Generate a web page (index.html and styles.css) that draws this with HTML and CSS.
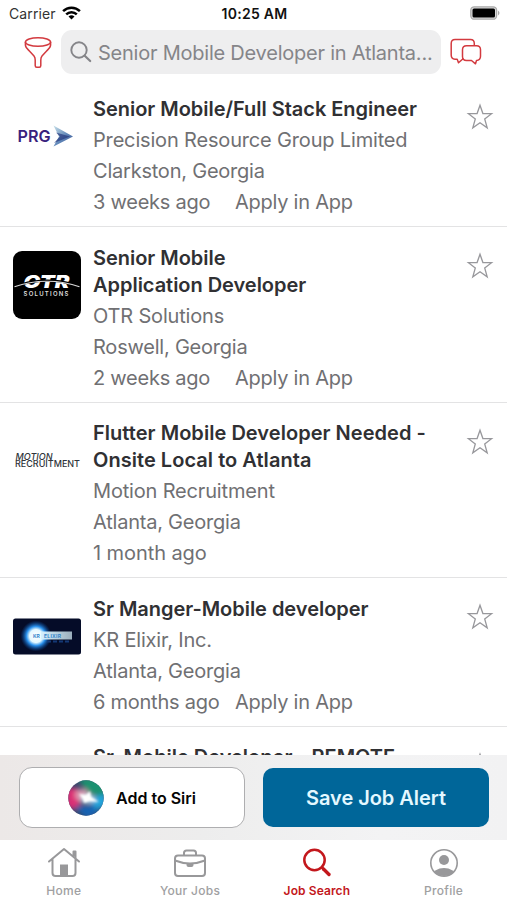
FILE: index.html
```
<!DOCTYPE html>
<html lang="en">
<head>
<meta charset="utf-8">
<title>Job Search</title>
<link rel="stylesheet" href="styles.css">
</head>
<body>
<div class="app">
  <header class="status">
    <div class="carrier"><span>Carrier</span>
      <svg width="19" height="14" viewBox="0 0 19 14"><g fill="none" stroke="#000" stroke-width="2.5"><path d="M1.1 5.2a12 12 0 0 1 16.8 0"/><path d="M4.2 8.4a7.6 7.6 0 0 1 10.6 0"/></g><path d="M9.5 13.6 6.5 10.600a4.300 4.300 0 0 1 6 0z"/></svg>
    </div>
    <time class="clock">10:25 AM</time>
    <svg class="battery" width="30" height="14" viewBox="0 0 30 14"><rect x=".8" y=".8" width="25.800" height="12.400" rx="3.500" fill="#ddd" stroke="#aaa" stroke-width="1.300"/><rect x="2.500" y="2.500" width="22.500" height="9" rx="1.500"/><path d="M28 4.500q3 2.500 0 5z" fill="#aaa"/></svg>
  </header>
  <div class="topbar">
    <svg class="funnel" width="28" height="33" viewBox="0 0 28 33" fill="none" stroke="#d33a3f" stroke-width="1.500"><ellipse cx="14" cy="6" rx="12.600" ry="4.300"/><path d="M1.400 6v3c0 2.500 2 4 4 6l4.600 5c1 1.200 1.200 2 1.200 4v5.500q0 1.800 1.500 1.800h2.600q1.500 0 1.500-1.800V24c0-2 .2-2.800 1.200-4l4.600-5c2-2 4-3.500 4-6V6"/></svg>
    <div class="search">
      <svg width="22" height="22" viewBox="0 0 22 22" fill="none" stroke="#858589" stroke-width="1.900" stroke-linecap="round"><circle cx="9" cy="9" r="7.700"/><path d="m14.700 14.700 5.500 5.300" stroke-width="2.200"/></svg>
      <span class="query">Senior Mobile Developer in Atlanta...</span>
    </div>
    <svg class="chat" width="32" height="28" viewBox="0 0 32 28" fill="none" stroke="#d33a3f" stroke-width="1.500" stroke-linejoin="round"><path d="M24.300 7V5.500Q24.300 1.500 20.500 1.500H5Q1.200 1.500 1.200 5.500V17Q1.200 21 5 21.200H7.200L8.500 24.800 12.500 21.200H14"/><path d="M16.500 7.800H26.500Q30.500 7.800 30.500 11.800V18.300Q30.500 22.300 26.500 22.500L25.500 25.800 21.500 22.500H16.500Q12.500 22.500 12.500 18.500V11.800Q12.500 7.800 16.500 7.800Z"/></svg>
  </div>
  <main class="jobs">
    <article class="job">
      <div class="logo">
        <svg width="68" height="68" viewBox="0 0 68 68"><defs><linearGradient id="arrow" x1="0" y1="0" x2="1" y2="1"><stop offset="0" stop-color="#c9e2ea"/><stop offset=".55" stop-color="#5f86b8"/><stop offset="1" stop-color="#39508f"/></linearGradient></defs><text class="prg" x="4.500" y="40" textLength="33" lengthAdjust="spacingAndGlyphs">PRG</text><path d="M40.500 23.500 60 34.500 40.500 44.500 46 34.500z" fill="url(#arrow)"/><path d="M41 41 47 34.500 43 30.500 57 34.500z" fill="#1f2f78" opacity=".65"/></svg>
      </div>
      <div class="info">
        <h2>Senior Mobile/Full Stack Engineer</h2>
        <p>Precision Resource Group Limited</p>
        <p class="place">Clarkston, Georgia</p>
        <p class="meta"><span>3 weeks ago</span><span>Apply in App</span></p>
      </div>
      <svg class="star" width="28" height="28" viewBox="0 0 28 28"><path d="M14 2.200 16.900 10.500 25.600 10.700 18.700 16 21.200 24.800 14 19.700 6.800 24.800 9.300 16 2.400 10.700 11.100 10.500Z"/></svg>
    </article>
    <article class="job">
      <div class="logo">
        <svg width="68" height="68" viewBox="0 0 68 68"><rect width="68" height="68" rx="9"/><text class="otr" x="10.500" y="37" textLength="46" lengthAdjust="spacingAndGlyphs">OTR</text><path d="M9 33.200Q20 29.600 34 29.600T59 33" stroke="#000" stroke-width="2.200" fill="none"/><path d="M1.500 35.800Q16 30.200 34 30.200T66.500 35.800" stroke="#d8d8d8" stroke-width="1.100" fill="none"/><text class="otr-sub" x="10.500" y="45" textLength="45" lengthAdjust="spacing">SOLUTIONS</text></svg>
      </div>
      <div class="info">
        <h2>Senior Mobile<br>Application Developer</h2>
        <p>OTR Solutions</p>
        <p class="place">Roswell, Georgia</p>
        <p class="meta"><span>2 weeks ago</span><span>Apply in App</span></p>
      </div>
      <svg class="star" width="28" height="28" viewBox="0 0 28 28"><path d="M14 2.200 16.900 10.500 25.600 10.700 18.700 16 21.200 24.800 14 19.700 6.800 24.800 9.300 16 2.400 10.700 11.100 10.500Z"/></svg>
    </article>
    <article class="job">
      <div class="logo">
        <svg width="68" height="68" viewBox="0 0 68 68"><text class="motion slant" x="2.500" y="32.500" textLength="37" lengthAdjust="spacingAndGlyphs">MOTION</text><text class="motion" x="2" y="39.500" textLength="65" lengthAdjust="spacingAndGlyphs">RECRUITMENT</text></svg>
      </div>
      <div class="info">
        <h2><span class="wide">Flutter Mobile Developer Needed -</span><br><span class="wide">Onsite Local to Atlanta</span></h2>
        <p>Motion Recruitment</p>
        <p class="place">Atlanta, Georgia</p>
        <p class="meta"><span>1 month ago</span></p>
      </div>
      <svg class="star" width="28" height="28" viewBox="0 0 28 28"><path d="M14 2.200 16.900 10.500 25.600 10.700 18.700 16 21.200 24.800 14 19.700 6.800 24.800 9.300 16 2.400 10.700 11.100 10.500Z"/></svg>
    </article>
    <article class="job">
      <div class="logo">
        <svg width="68" height="68" viewBox="0 0 68 68"><defs><radialGradient id="glow"><stop offset="0" stop-color="#fff"/><stop offset=".42" stop-color="#e4f8ff"/><stop offset=".62" stop-color="#2a91ed"/><stop offset="1" stop-color="#064a9f" stop-opacity="0"/></radialGradient><linearGradient id="beam"><stop offset="0" stop-color="#d5f1ff"/><stop offset="1" stop-color="#9baebc"/></linearGradient></defs><rect y="16.500" width="68" height="36" rx="2.500" fill="#050c28"/><circle cx="23" cy="34" r="15.500" fill="url(#glow)"/><rect x="28" y="29.500" width="31" height="8" fill="url(#beam)"/><path d="M34 39.500h23" stroke="#143876" stroke-width="2" stroke-dasharray="4 2"/><text class="kr" x="20" y="35.500">KR</text><text class="kr" x="31" y="35.500" textLength="17">ELIXIR</text></svg>
      </div>
      <div class="info">
        <h2>Sr Manger-Mobile developer</h2>
        <p>KR Elixir, Inc.</p>
        <p class="place">Atlanta, Georgia</p>
        <p class="meta"><span>6 months ago</span><span>Apply in App</span></p>
      </div>
      <svg class="star" width="28" height="28" viewBox="0 0 28 28"><path d="M14 2.200 16.900 10.500 25.600 10.700 18.700 16 21.200 24.800 14 19.700 6.800 24.800 9.300 16 2.400 10.700 11.100 10.500Z"/></svg>
    </article>
    <article class="job">
      <div class="logo"></div>
      <div class="info"><h2>Sr. Mobile Developer - REMOTE</h2></div>
      <svg class="star" width="28" height="28" viewBox="0 0 28 28"><path d="M14 2.200 16.900 10.500 25.600 10.700 18.700 16 21.200 24.800 14 19.700 6.800 24.800 9.300 16 2.400 10.700 11.100 10.500Z"/></svg>
    </article>
  </main>
  <div class="actions">
    <button class="siri"><svg width="36" height="36" viewBox="0 0 36 36"><defs><clipPath id="orb"><circle cx="18" cy="18" r="17.700"/></clipPath><filter id="soft" x="-50%" y="-50%" width="200%" height="200%"><feGaussianBlur stdDeviation="2.500"/></filter><filter id="fine" x="-50%" y="-50%" width="200%" height="200%"><feGaussianBlur stdDeviation="1"/></filter></defs><g clip-path="url(#orb)"><rect width="36" height="36" fill="#35476d"/><g filter="url(#soft)"><path d="M10-2H38V17L20 14Z" fill="#1d9170"/><path d="M-2 8 10 8 13 24 5 30-2 26Z" fill="#dc2e75"/><path d="M20 18 38 14V26L28 30Z" fill="#22a5dc"/><path d="M7 27 26 25 30 34 18 38Z" fill="#1464b4"/><ellipse cx="14" cy="15" rx="7" ry="6" fill="#dc9cb4"/><ellipse cx="20" cy="19" rx="7" ry="4" fill="#c8e5f5"/></g><path d="M11 14 18 15 22 11 23 17 31 22 22 21 16 23 15 19Z" fill="#fff" filter="url(#fine)"/></g></svg><span>Add to Siri</span></button>
    <button class="alert"><span>Save Job Alert</span></button>
  </div>
  <nav class="tabs">
    <a class="tab"><svg width="36" height="32" viewBox="0 0 36 32" fill="none" stroke="#98989a" stroke-width="2" stroke-linejoin="round" stroke-linecap="round"><path d="M3 14.500 18 2 33 14.500M6.500 12V26Q6.500 29 9.500 29H26.500Q29.500 29 29.500 26V12M27.500 9V4.500H29.500V11"/><path d="M14 17.500H22V29H14z" fill="#98989a" stroke="none"/></svg><span>Home</span></a>
    <a class="tab"><svg width="36" height="32" viewBox="0 0 36 32" fill="none" stroke="#98989a" stroke-width="2"><rect x="3" y="8.500" width="30" height="20.500" rx="3"/><path d="M12 8V6Q12 3.500 14.500 3.500H21.500Q24 3.500 24 6V8M3 13.500Q18 19.500 33 13.500"/><path d="M14.500 16.500H21.500V18Q21.500 20 19.500 20H16.500Q14.500 20 14.500 18z" fill="#98989a" stroke="none"/></svg><span>Your Jobs</span></a>
    <a class="tab active"><svg width="36" height="32" viewBox="0 0 36 32" fill="none" stroke="#c3171c" stroke-width="2.500" stroke-linecap="round"><circle cx="15.500" cy="13" r="10.200"/><path d="M23 20.500 24.500 22"/><path d="M24.500 22 30 27.500" stroke-width="3.400"/></svg><span>Job Search</span></a>
    <a class="tab"><svg width="36" height="32" viewBox="0 0 36 32"><defs><clipPath id="face"><circle cx="18" cy="16" r="13"/></clipPath></defs><circle cx="18" cy="16" r="13.200" fill="none" stroke="#98989a" stroke-width="1.600"/><circle cx="18" cy="13" r="5" fill="#98989a"/><ellipse cx="18" cy="28.500" rx="11.500" ry="7.500" fill="#98989a" clip-path="url(#face)"/></svg><span>Profile</span></a>
  </nav>
</div>
</body>
</html>
```

FILE: styles.css
```
* { box-sizing: border-box; }
body { margin: 0; background: #fff; font-family: Inter, "Liberation Sans", sans-serif; }
svg { display: block; flex: none; }
h2, p { margin: 0; white-space: nowrap; }
.app { width: 507px; height: 900px; overflow: hidden; display: flex; flex-direction: column; }
.status { flex: none; height: 28px; display: grid; grid-template-columns: 1fr auto 1fr; align-items: center; padding: 0 7px 2px 9px; font-size: 14px; color: #111; }
.carrier { display: flex; align-items: center; gap: 6px; color: #333; }
.carrier span { letter-spacing: .12px; }
.clock { font-weight: 600; letter-spacing: .25px; }
.battery { justify-self: end; }
.topbar { flex: none; height: 50px; display: flex; align-items: center; padding: 0 25px 2px 24px; }
.search { width: 380px; height: 44px; margin: 0 9px; border-radius: 11px; background: #eeeeef; display: flex; align-items: center; padding-left: 9px; gap: 6px; }
.query { font-size: 20px; color: #858589; white-space: nowrap; letter-spacing: -.23px; padding-top: 1px; }
.jobs { flex: none; height: 676.500px; overflow: hidden; }
.job { display: flex; align-items: flex-start; padding: 17.500px 13px 8px; border-bottom: 1px solid #e3e3e4; }
.job:first-child { padding-bottom: 8.600px; }
.logo { width: 68px; height: 68px; margin: 6.500px 12px 0 0; flex: none; }
.info { flex: 1; min-width: 0; }
h2 { font-size: 20px; line-height: 27px; font-weight: 600; letter-spacing: -.03px; color: #303033; margin-bottom: 2px; }
.wide { letter-spacing: .04px; }
p { font-size: 20px; line-height: 31px; letter-spacing: -.17px; color: #707073; }
.place { letter-spacing: -.22px; }
.meta { display: flex; letter-spacing: -.25px; }
.meta span:first-child:not(:last-child) { width: 142px; }
.meta span:only-child { letter-spacing: -.08px; }
.star { margin: 7.500px 0 0; fill: none; stroke: #98989c; stroke-width: 1.300; }
.prg { font: 600 16px Inter, sans-serif; fill: #39217d; }
.otr { font: italic 900 18px Inter, sans-serif; fill: #fff; }
.otr-sub { font: 600 6px Inter, sans-serif; fill: #ddd; }
.motion { font: 500 9px Inter, sans-serif; fill: #30343a; }
.slant { font-style: italic; }
.kr { font: 700 5px Inter, sans-serif; fill: #3185cb; }
.actions { flex: none; height: 85.500px; padding: 12.500px 18px 12px 19px; display: flex; gap: 18px; background: linear-gradient(90deg, #ece8e7, #ededed 40%, #f3f3f4 75%, #f2f2f3); }
button { border: 0; padding: 0; margin: 0; font-family: inherit; display: flex; align-items: center; justify-content: center; white-space: nowrap; }
.siri { width: 226px; height: 61px; background: #fff; border: 1px solid #aeaeb0; border-radius: 13px; gap: 12px; font-size: 16px; font-weight: 600; color: #050505; }
.alert { width: 226px; height: 59px; margin-top: .5px; background: #006699; border-radius: 10px; color: #e4f8ff; font-size: 20px; font-weight: 600; letter-spacing: -.05px; }
.alert span { padding-top: 1px; }
.tabs { flex: none; height: 60px; display: grid; grid-template-columns: repeat(4, 1fr); }
.tab { display: flex; flex-direction: column; align-items: center; padding-top: 7px; color: #a0a0a2; font-size: 12px; line-height: 16px; font-weight: 500; letter-spacing: .3px; }
.tab span { margin-top: 4px; white-space: nowrap; }
.tab:first-child { padding-left: 1px; }
.active { color: #c3171c; font-weight: 600; letter-spacing: .1px; }
```
